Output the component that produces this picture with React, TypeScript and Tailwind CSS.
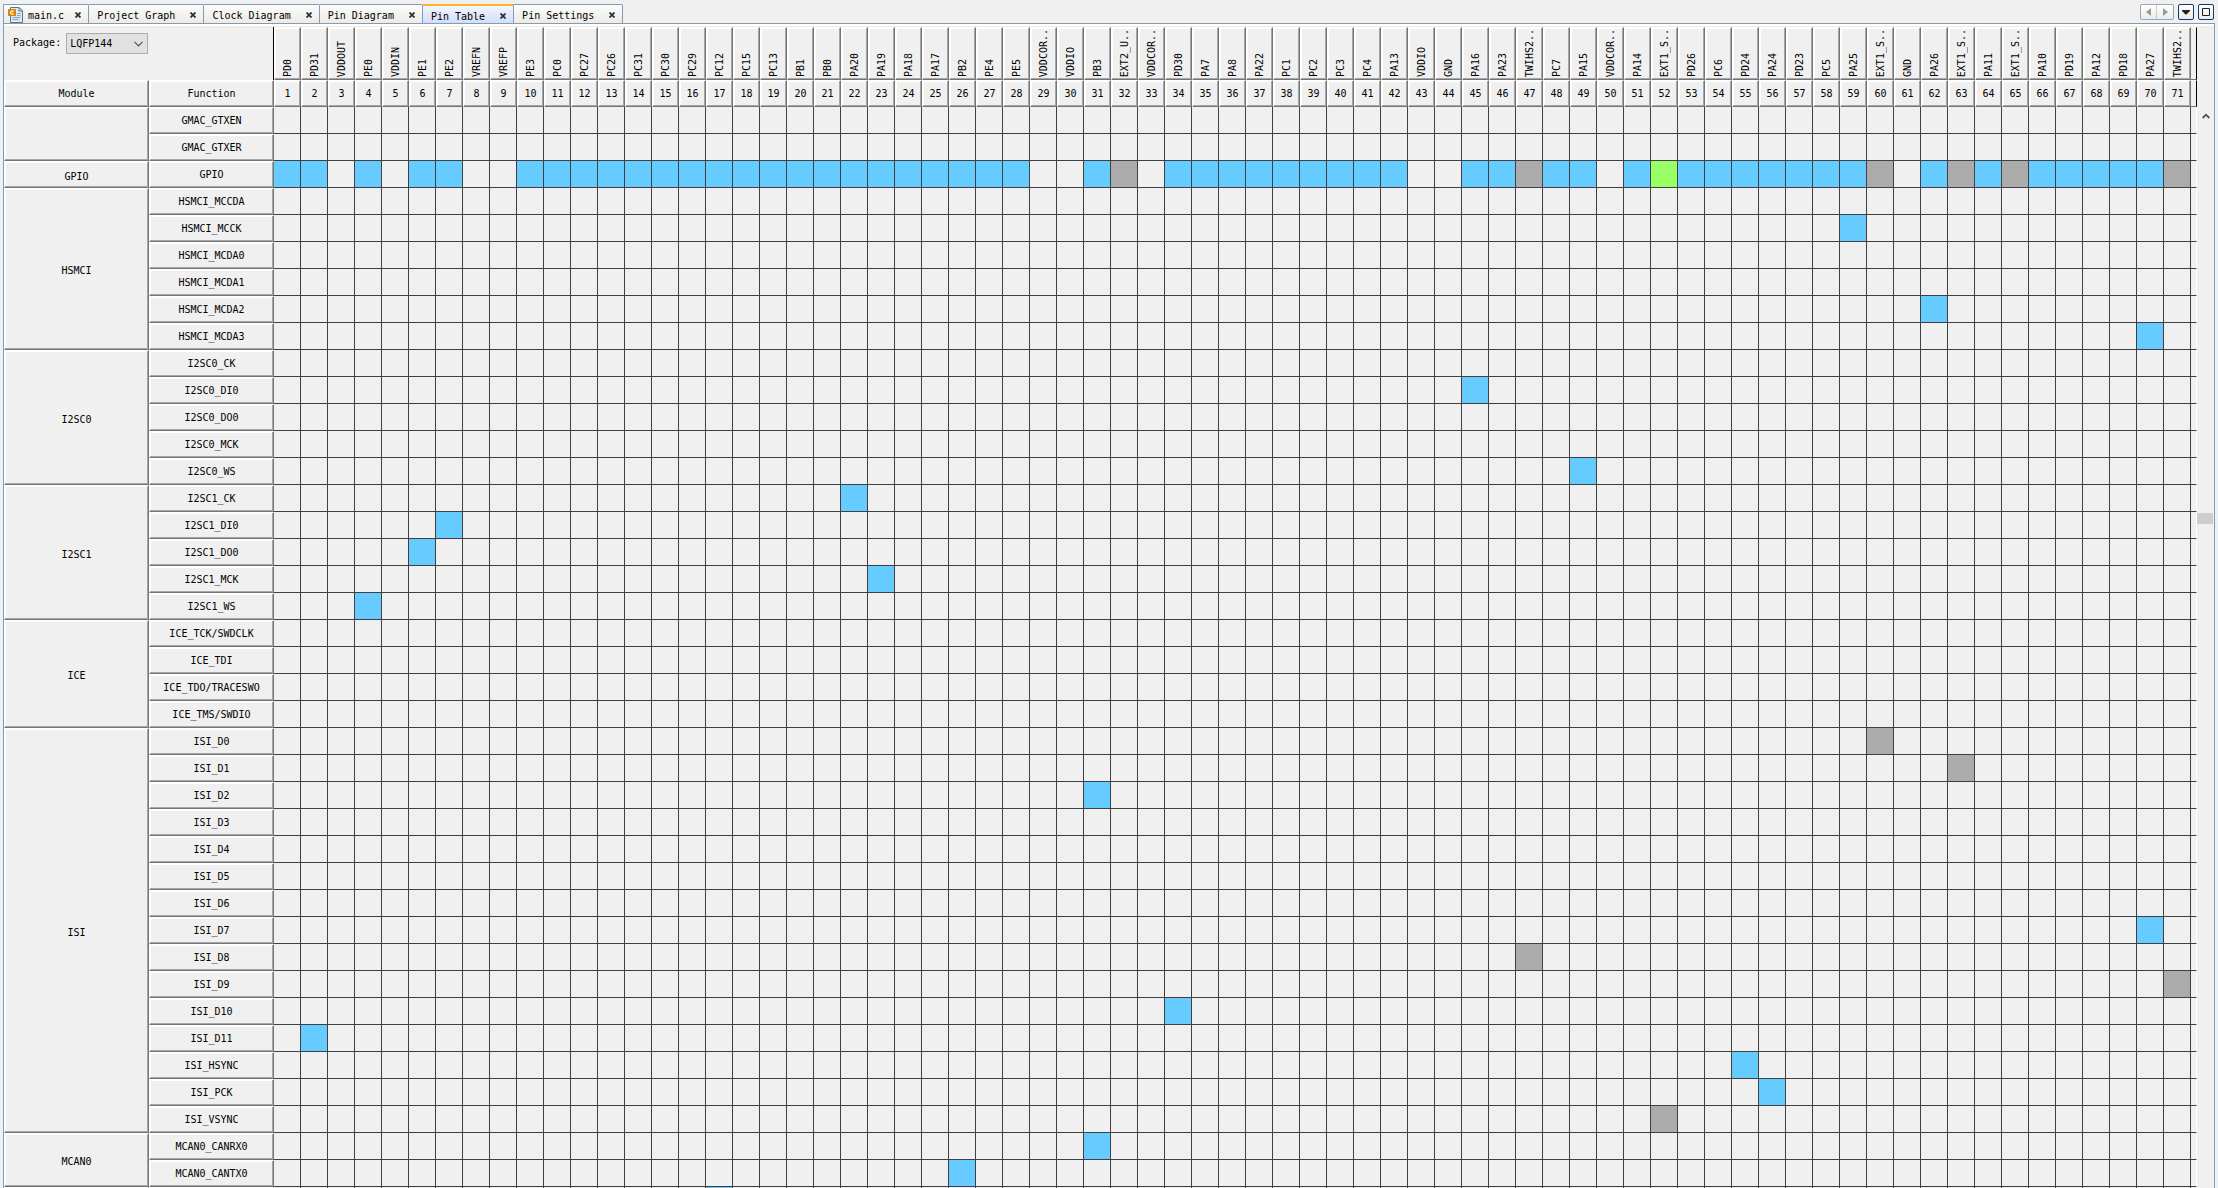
import React from "react";

type Mark = "blue" | "gray" | "green";
type Fn = { name: string; marks?: Record<number, Mark> };
type Module = { name: string; functions: Fn[] };

const PINS =
  "PD0 PD31 VDDOUT PE0 VDDIN PE1 PE2 VREFN VREFP PE3 PC0 PC27 PC26 PC31 PC30 PC29 PC12 PC15 PC13 PB1 PB0 PA20 PA19 PA18 PA17 PB2 PE4 PE5 VDDCOR.. VDDIO PB3 EXT2_U.. VDDCOR.. PD30 PA7 PA8 PA22 PC1 PC2 PC3 PC4 PA13 VDDIO GND PA16 PA23 TWIHS2.. PC7 PA15 VDDCOR.. PA14 EXT1_S.. PD26 PC6 PD24 PA24 PD23 PC5 PA25 EXT1_S.. GND PA26 EXT1_S.. PA11 EXT1_S.. PA10 PD19 PA12 PD18 PA27 TWIHS2..".split(
    " ",
  );

const MARK_CLASS: Record<Mark, string> = {
  blue: "bg-[#66ccff]",
  gray: "bg-[#ababab]",
  green: "bg-[#99ff66]",
};

// Supply and ground pins have no GPIO function.
const NO_GPIO = [3, 5, 8, 9, 29, 30, 33, 43, 44, 50, 61];
const TAKEN = [32, 47, 60, 63, 65, 71];

const gpioMarks: Record<number, Mark> = {};
PINS.forEach((_, i) => {
  const pin = i + 1;
  if (NO_GPIO.includes(pin)) return;
  gpioMarks[pin] = pin === 52 ? "green" : TAKEN.includes(pin) ? "gray" : "blue";
});

const MODULES: Module[] = [
  { name: "", functions: [{ name: "GMAC_GTXEN" }, { name: "GMAC_GTXER" }] },
  { name: "GPIO", functions: [{ name: "GPIO", marks: gpioMarks }] },
  {
    name: "HSMCI",
    functions: [
      { name: "HSMCI_MCCDA" },
      { name: "HSMCI_MCCK", marks: { 59: "blue" } },
      { name: "HSMCI_MCDA0" },
      { name: "HSMCI_MCDA1" },
      { name: "HSMCI_MCDA2", marks: { 62: "blue" } },
      { name: "HSMCI_MCDA3", marks: { 70: "blue" } },
    ],
  },
  {
    name: "I2SC0",
    functions: [
      { name: "I2SC0_CK" },
      { name: "I2SC0_DI0", marks: { 45: "blue" } },
      { name: "I2SC0_DO0" },
      { name: "I2SC0_MCK" },
      { name: "I2SC0_WS", marks: { 49: "blue" } },
    ],
  },
  {
    name: "I2SC1",
    functions: [
      { name: "I2SC1_CK", marks: { 22: "blue" } },
      { name: "I2SC1_DI0", marks: { 7: "blue" } },
      { name: "I2SC1_DO0", marks: { 6: "blue" } },
      { name: "I2SC1_MCK", marks: { 23: "blue" } },
      { name: "I2SC1_WS", marks: { 4: "blue" } },
    ],
  },
  {
    name: "ICE",
    functions: [
      { name: "ICE_TCK/SWDCLK" },
      { name: "ICE_TDI" },
      { name: "ICE_TDO/TRACESWO" },
      { name: "ICE_TMS/SWDIO" },
    ],
  },
  {
    name: "ISI",
    functions: [
      { name: "ISI_D0", marks: { 60: "gray" } },
      { name: "ISI_D1", marks: { 63: "gray" } },
      { name: "ISI_D2", marks: { 31: "blue" } },
      { name: "ISI_D3" },
      { name: "ISI_D4" },
      { name: "ISI_D5" },
      { name: "ISI_D6" },
      { name: "ISI_D7", marks: { 70: "blue" } },
      { name: "ISI_D8", marks: { 47: "gray" } },
      { name: "ISI_D9", marks: { 71: "gray" } },
      { name: "ISI_D10", marks: { 34: "blue" } },
      { name: "ISI_D11", marks: { 2: "blue" } },
      { name: "ISI_HSYNC", marks: { 55: "blue" } },
      { name: "ISI_PCK", marks: { 56: "blue" } },
      { name: "ISI_VSYNC", marks: { 52: "gray" } },
    ],
  },
  {
    name: "MCAN0",
    functions: [
      { name: "MCAN0_CANRX0", marks: { 31: "blue" } },
      { name: "MCAN0_CANTX0", marks: { 26: "blue" } },
    ],
  },
  { name: "", functions: [{ name: "", marks: { 17: "blue" } }] },
];

const TABS = ["main.c", "Project Graph", "Clock Diagram", "Pin Diagram", "Pin Table", "Pin Settings"];
const ACTIVE = "Pin Table";

const BEVEL =
  "border border-t-white border-l-white border-r-[#757575] border-b-[#757575] shadow-[inset_-1px_-1px_0_#a6a6a6,inset_1px_1px_0_#ffffff] p-0 font-normal";
const CELL = "border-r border-b border-[#404040] p-0";

function FileIcon() {
  return (
    <svg width="16" height="16" viewBox="0 0 16 16" className="shrink-0" aria-hidden="true">
      <path d="M2.5 0.5H11L14.5 4V15.5H2.5Z" fill="#dbe8f2" stroke="#5f7488" />
      <path d="M11 0.5V4H14.5Z" fill="#f7fafc" stroke="#5f7488" />
      <path d="M9 6.5H12.5M9 8.5H12.5M4.5 10.5H12.5M4.5 12.5H10.5" stroke="#8aa4ba" />
      <rect x="0" y="2" width="8" height="7" fill="#d9860d" />
      <path d="M5.5 4.5C4.6 3.6 2.6 3.8 2.6 5.5C2.6 7.2 4.6 7.4 5.5 6.5" fill="none" stroke="#fff" strokeWidth="1.2" />
    </svg>
  );
}

function CloseButton({ label }: { label: string }) {
  return (
    <button type="button" aria-label={`Close ${label}`} className="flex h-4 w-3 items-center justify-center">
      <svg width="6" height="6" viewBox="0 0 6 6" aria-hidden="true">
        <path d="M0.5 0.5L5.5 5.5M5.5 0.5L0.5 5.5" stroke="#303030" strokeWidth="1.8" />
      </svg>
    </button>
  );
}

function Tab({ label }: { label: string }) {
  const active = label === ACTIVE;
  const hasIcon = label === "main.c";
  const look = active
    ? "h-5 border-t-2 border-t-[#ffb52e] border-r-[#7f9db9] from-[#f3f6fd] to-[#cfdcf6]"
    : "h-[19px] rounded-tr-xs border-t border-[#7f9db9] from-[#fcfcfb] to-[#ecebe5]";
  const spacing = hasIcon ? "gap-2 pl-1" : "gap-3 pl-2";
  return (
    <div className={`flex items-center border-r bg-linear-to-b pt-0.5 pr-1 ${spacing} ${look}`}>
      <button type="button" role="tab" aria-selected={active} className="flex items-center gap-1">
        {hasIcon && <FileIcon />}
        <span className="pt-0.5">{label}</span>
      </button>
      <CloseButton label={label} />
    </div>
  );
}

function WindowButtons() {
  return (
    <div className="flex gap-1">
      <div className="flex h-4 overflow-hidden rounded-xs border border-[#93a9c0] bg-linear-to-b from-white to-[#ecebe6]">
        <button type="button" aria-label="Scroll tabs left" className="flex w-4 items-center justify-center border-r border-[#c9cdd2]">
          <svg width="5" height="8" viewBox="0 0 5 8" aria-hidden="true"><path d="M5 0V8L0 4Z" fill="#9a9a9a" /></svg>
        </button>
        <button type="button" aria-label="Scroll tabs right" className="flex w-4 items-center justify-center">
          <svg width="5" height="8" viewBox="0 0 5 8" aria-hidden="true"><path d="M0 0V8L5 4Z" fill="#9a9a9a" /></svg>
        </button>
      </div>
      <button type="button" aria-label="Show opened documents" className="flex h-4 w-4 items-center justify-center rounded-xs border border-[#0b3c72] bg-linear-to-b from-white to-[#ecebe6]">
        <svg width="8" height="5" viewBox="0 0 8 5" aria-hidden="true"><path d="M0 0H8V1L4.5 4.5H3.5L0 1Z" fill="#222" /></svg>
      </button>
      <button type="button" aria-label="Maximize window" className="flex h-4 w-4 items-center justify-center rounded-xs border border-[#0b3c72] bg-linear-to-b from-white to-[#ecebe6]">
        <svg width="8" height="8" viewBox="0 0 8 8" aria-hidden="true"><path d="M0.5 0.5H7.5V7.5H0.5Z" fill="none" stroke="#222" /></svg>
      </button>
    </div>
  );
}

function PackagePicker() {
  return (
    <div className="flex h-[53px] items-start gap-[5px] border-r border-black pt-[6px] pl-[9px]">
      <label htmlFor="package" className="leading-5">Package:</label>
      <div className="relative">
        <select
          id="package"
          defaultValue="LQFP144"
          className="h-[21px] w-[82px] appearance-none border border-[#adadad] bg-[#e1e1e1] pl-[3px]"
        >
          <option>LQFP144</option>
        </select>
        <svg width="9" height="6" viewBox="0 0 9 6" className="pointer-events-none absolute top-2 right-[5px]" aria-hidden="true">
          <path d="M0.5 0.8L4.5 4.8L8.5 0.8" fill="none" stroke="#555" strokeWidth="1.2" />
        </svg>
      </div>
    </div>
  );
}

function PinTable() {
  return (
    <table className="w-full table-fixed border-separate border-spacing-0 text-center">
      <colgroup>
        <col className="w-[145px]" />
        <col className="w-[125px]" />
        {PINS.map((_, i) => (
          <col key={i} className="w-[27px]" />
        ))}
        <col />
      </colgroup>
      <thead>
        <tr className="h-[53px]">
          <td colSpan={2} className="p-0 text-left align-top">
            <PackagePicker />
          </td>
          {PINS.map((pin, i) => (
            <th key={i} scope="col" className={`${BEVEL} align-bottom`}>
              <div className="flex justify-center">
                <span className="w-3 rotate-180 pt-0.5 text-left leading-3 whitespace-nowrap [writing-mode:vertical-rl]">{pin}</span>
              </div>
            </th>
          ))}
          <td className="border-t border-r border-b border-t-white border-r-black border-b-[#757575] p-0" />
        </tr>
        <tr className="h-[27px]">
          <th scope="col" className={BEVEL}>Module</th>
          <th scope="col" className={BEVEL}>Function</th>
          {PINS.map((_, i) => (
            <th key={i} scope="col" className={BEVEL}>{i + 1}</th>
          ))}
          <td className="border-t border-r border-b border-t-white border-r-black border-b-[#757575] p-0" />
        </tr>
      </thead>
      <tbody>
        {MODULES.map((mod, m) =>
          mod.functions.map((fn, f) => (
            <tr key={`${m}-${f}`} className="h-[27px]">
              {f === 0 && (
                <th scope="rowgroup" rowSpan={mod.functions.length} className={BEVEL}>
                  <span className="block pt-1">{mod.name}</span>
                </th>
              )}
              <th scope="row" className={BEVEL}>{fn.name}</th>
              {PINS.map((_, i) => {
                const mark = fn.marks?.[i + 1];
                return <td key={i} className={mark ? `${CELL} ${MARK_CLASS[mark]}` : CELL} />;
              })}
              <td className="border-r border-b border-r-white border-b-[#404040] p-0" />
            </tr>
          )),
        )}
      </tbody>
    </table>
  );
}

function ScrollBar() {
  return (
    <div className="flex w-[17px] shrink-0 flex-col pt-20" aria-hidden="true">
      <button type="button" tabIndex={-1} className="flex h-[17px] items-center justify-center">
        <svg width="8" height="6" viewBox="0 0 8 6"><path d="M0.7 5L4 1.7L7.3 5" fill="none" stroke="#505050" strokeWidth="1.8" /></svg>
      </button>
      <div className="grow-[389]" />
      <div className="mr-px h-[11px] bg-[#cdcdcd]" />
      <div className="grow-[664]" />
    </div>
  );
}

export default function App() {
  return (
    <div className="flex h-screen flex-col overflow-hidden bg-[#f0f0f0] font-['DejaVu_Sans_Mono','Liberation_Mono',monospace] text-[10px] leading-3 text-black">
      <div className="flex h-6 shrink-0 items-start justify-between pt-1 pr-1 pl-[3px]">
        <div role="tablist" className="flex border-l border-[#7f9db9]">
          {TABS.map((label) => (
            <Tab key={label} label={label} />
          ))}
        </div>
        <WindowButtons />
      </div>
      <div className="-mt-px mr-[3px] ml-[3px] flex min-h-0 grow flex-col border-x border-t border-[#7f9db9]">
        <div className="h-[3px] shrink-0 border-b border-[#f3ead6] bg-white" />
        <div className="flex min-h-0 grow">
          <div className="min-w-0 grow overflow-hidden">
            <PinTable />
          </div>
          <ScrollBar />
        </div>
      </div>
    </div>
  );
}
